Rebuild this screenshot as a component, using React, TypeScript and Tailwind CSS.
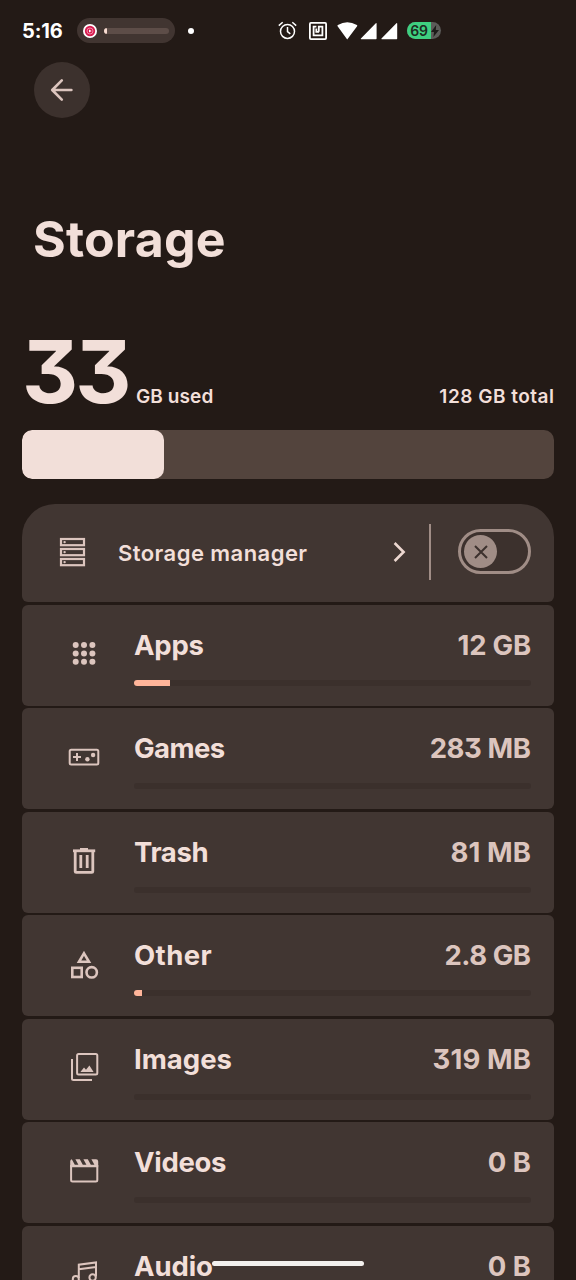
import type { ReactNode } from "react";

function Glyph({ children }: { children: ReactNode }) {
  return (
    <svg width="32" height="32" viewBox="0 0 32 32" fill="none" stroke="currentColor" strokeWidth="2">
      {children}
    </svg>
  );
}

const dots = [7.7, 16, 24.4];

const icons: Record<string, ReactNode> = {
  apps: (
    <Glyph>
      {dots.map((y) => dots.map((x) => <circle key={`${x}-${y}`} cx={x} cy={y + 0.4} r="3" fill="currentColor" stroke="none" />))}
    </Glyph>
  ),
  games: (
    <Glyph>
      <rect x="1.7" y="8.7" width="28.6" height="14.8" rx="1.5" />
      <path d="M9 12v8M5 16h8" />
      <circle cx="19.4" cy="18.2" r="2.2" fill="currentColor" stroke="none" />
      <circle cx="25.1" cy="14" r="2.2" fill="currentColor" stroke="none" />
    </Glyph>
  ),
  trash: (
    <Glyph>
      <path d="M7.2 7v20.4q0 1 1 1h15.6q1 0 1-1V7" strokeWidth="2.8" />
      <path d="M5 6.8h22.2" strokeWidth="2.8" />
      <path d="M12 5h8" strokeWidth="2" />
      <path d="M12.8 11v13M19.2 11v13" strokeWidth="2.8" />
    </Glyph>
  ),
  other: (
    <Glyph>
      <path d="M16 5.4 21 13.8H11Z" strokeWidth="2.6" />
      <rect x="4.3" y="19.8" width="9.4" height="9.2" strokeWidth="2.6" />
      <circle cx="23.7" cy="24.3" r="5.2" strokeWidth="2.6" />
    </Glyph>
  ),
  images: (
    <Glyph>
      <rect x="9.1" y="3" width="20.2" height="20.6" rx="1.5" />
      <path d="M4 8v19.4q0 1.5 1.5 1.5H24" />
      <path d="M12.4 21 16 16.6l2 2.2 3.4-4.4 4.2 6.6Z" fill="currentColor" stroke="none" />
    </Glyph>
  ),
  videos: (
    <Glyph>
      <path d="M3.1 10v14.9q0 1.5 1.5 1.5h23.2q1.5 0 1.5-1.5V10" />
      <path d="M2.2 6.5Q2.2 4.6 3.8 4.2L6.8 9.8h3.6L7.4 4.2h4.4L14.8 9.8h3.6L15.4 4.2h4.4L22.8 9.8h3.6L23.4 4.2h4.6Q30.2 4.2 30.2 6.5V12.2H2.2Z" fill="currentColor" stroke="none" />
    </Glyph>
  ),
  audio: (
    <Glyph>
      <path d="M10.8 20V6.7L28 4.5v14M10.8 11.3 28 8.9" />
      <circle cx="7.8" cy="21.1" r="3" />
      <circle cx="24.6" cy="19.5" r="3.2" />
    </Glyph>
  ),
};

const rows = [
  { icon: "apps", name: "Apps", size: "12 GB", used: 36, nameCls: "tracking-[-0.2px]", sizeCls: "tracking-[-0.2px]" },
  { icon: "games", name: "Games", size: "283 MB", used: 0, nameCls: "tracking-[-0.6px]", sizeCls: "tracking-[-0.4px] mr-[0.4px]" },
  { icon: "trash", name: "Trash", size: "81 MB", used: 0, nameCls: "tracking-[-0.4px]", sizeCls: "tracking-[0.1px]" },
  { icon: "other", name: "Other", size: "2.8 GB", used: 8, nameCls: "tracking-[0.4px]", sizeCls: "tracking-[-0.5px] mr-[0.5px]" },
  { icon: "images", name: "Images", size: "319 MB", used: 0, nameCls: "tracking-[0px]", sizeCls: "tracking-[0.1px]" },
  { icon: "videos", name: "Videos", size: "0 B", used: 0, nameCls: "tracking-[-0.3px]", sizeCls: "tracking-[0px]" },
  { icon: "audio", name: "Audio", size: "0 B", used: 0, nameCls: "tracking-[-0.1px]", sizeCls: "tracking-[0px]" },
];

function StatusBar() {
  return (
    <header className="flex h-[61px] shrink-0 items-center pl-[22px] text-white">
      <span className="w-[55px] text-[20px] leading-none font-bold tracking-[-0.1px]">5:16</span>
      <div className="flex h-[25px] w-[98px] items-center rounded-full bg-[#413531] pl-[6px]">
        <svg width="14" height="14" viewBox="0 0 14 14">
          <circle cx="7" cy="7" r="7" fill="#fff" />
          <circle cx="7" cy="7" r="5.2" fill="#d81b50" />
          <circle cx="7" cy="7" r="3" fill="none" stroke="#f6a3b8" strokeWidth="0.8" />
          <path d="M6 5.4 8.6 7 6 8.6Z" fill="#fff" />
        </svg>
        <div className="ml-[7px] h-[6px] w-[65px] overflow-hidden rounded-full bg-[#5d4d48]">
          <div className="h-full w-[3px] rounded-[1px] bg-[#f9dcd2]" />
        </div>
      </div>
      <div className="ml-[13px] size-[6px] rounded-full bg-white" />
      <svg className="ml-[84px]" width="19" height="19" viewBox="0 0 19 19" fill="none" stroke="#fff" strokeWidth="1.5">
        <circle cx="9.5" cy="10.4" r="7" />
        <path d="M9.5 6v4.7l2.8 2.2M.8 4.6 4.7 1.2M18.2 4.6l-3.9-3.4" />
      </svg>
      <svg className="ml-[12px]" width="18" height="18" viewBox="0 0 18 18" fill="none" stroke="#fff" strokeWidth="1.8">
        <rect x=".9" y=".9" width="16.2" height="16.2" rx="1" />
        <path d="M7.4 4.6H4.6v8.8h8.8V4.6H9.8v5.2M7.3 6.6v3.3h2.8" />
      </svg>
      <svg className="ml-[10px]" width="61" height="18" viewBox="0 0 61 18" fill="#fff">
        <path d="M10.2 17.6.6 4.2Q.2 3.4.9 3 10.2-2.4 19.9 3q.6.4.2 1.2Z" />
        <path d="M39.6 1.4v15.2q0 .6-.6.6H24.2q-.8 0-.3-.6L38.8 1.2q.8-.6.8.2Z" />
        <path d="M60.2 1.4v15.2q0 .6-.6.6H44.8q-.8 0-.3-.6L59.4 1.2q.8-.6.8.2Z" />
      </svg>
      <div className="ml-[9px] flex h-[17px] w-[34px] items-center overflow-hidden rounded-full bg-[#5c5b59]">
        <span className="flex h-full w-[24px] items-center justify-center bg-[#3ecf80] text-[14px] leading-none font-semibold tracking-[-0.2px] text-[#1c2a20]">69</span>
        <svg width="8" height="12" viewBox="0 0 8 12" fill="#1d1b19">
          <path d="M5.2 0 0 7h3L2.4 12 8 5H4.8Z" />
        </svg>
      </div>
    </header>
  );
}

export default function App() {
  return (
    <div className="relative flex h-[1280px] w-[576px] flex-col overflow-hidden bg-[#231a16] font-['Inter',sans-serif] text-[#f2dfd9] [font-feature-settings:'cv09'_1]">
      <StatusBar />
      <button className="mt-[1px] ml-[34px] flex size-[56px] shrink-0 items-center justify-center rounded-full bg-[#3c312d]">
        <svg width="24" height="24" viewBox="0 0 24 24" fill="none" stroke="#dcc5be" strokeWidth="2.6" strokeLinecap="round" strokeLinejoin="round">
          <path d="M11.8 2.4 2.2 12l9.6 9.6M2.6 12h18.8" />
        </svg>
      </button>
      <h1 className="mt-[91px] ml-[33px] h-[60px] shrink-0 text-[50px] leading-[60px] font-bold tracking-[0.2px]">Storage</h1>

      <section className="mt-[59px] flex h-[88px] shrink-0 items-baseline justify-between pr-[22px] pl-[22px]">
        <div className="flex items-baseline">
          <span className="w-[114px] text-[87px] leading-[88px] font-bold tracking-[-3px]">33</span>
          <span className="text-[19px] font-semibold tracking-[0.1px]">GB used</span>
        </div>
        <span className="-mr-[0.5px] text-[19px] font-semibold tracking-[0.5px]">128 GB total</span>
      </section>

      <div className="mx-[22px] mt-[14px] h-[49px] shrink-0 overflow-hidden rounded-[10px] bg-[#53443d]">
        <div className="h-full w-[142px] rounded-[10px] bg-[#f2dfd9]" />
      </div>

      <main className="mx-[22px] mt-[25px] flex flex-col gap-[2.5px]">
        <section className="flex h-[98px] shrink-0 items-center rounded-t-[33px] rounded-b-[6px] bg-[#413632]">
          <svg className="-mt-[3px] ml-[37px] text-[#dcc5be]" width="27" height="30" viewBox="0 0 27 30" fill="none" stroke="currentColor" strokeWidth="2.2">
            {[2, 12, 22].map((y) => (
              <g key={y}>
                <rect x="2" y={y} width="23" height="6.2" />
                <circle cx="5.6" cy={y + 3.1} r="1.2" fill="currentColor" stroke="none" />
              </g>
            ))}
          </svg>
          <span className="mt-[1px] ml-[32px] w-[275px] text-[22px] font-semibold tracking-[0.45px]">Storage manager</span>
          <svg className="-mt-[3px]" width="14" height="22" viewBox="0 0 14 22" fill="none" stroke="#ecd7d0" strokeWidth="2.6">
            <path d="m1.6 2 9 9-9 9" />
          </svg>
          <div className="-mt-[2px] ml-[22px] h-[56px] w-[2px] bg-[#a08d86]" />
          <div className="-mt-[3px] ml-[27px] flex h-[45px] w-[73px] items-center rounded-full border-[3px] border-[#a08d86] bg-[#3c312d] pl-[3px]">
            <div className="flex size-[33px] items-center justify-center rounded-full bg-[#a08d86]">
              <svg width="14" height="14" viewBox="0 0 14 14" stroke="#3c312d" strokeWidth="2">
                <path d="m1 1 12 12M13 1 1 13" />
              </svg>
            </div>
          </div>
        </section>

        {rows.map((row) => (
          <section key={row.name} className="flex h-[101px] shrink-0 rounded-[6px] bg-[#413632]">
            <div className="flex h-[97px] w-[112px] items-center justify-center pl-[12px] text-[#dcc5be]">{icons[row.icon]}</div>
            <div className="mr-[23px] flex-1 pt-[20px]">
              <div className="flex h-[40px] items-center justify-between text-[27.5px] leading-[40px] font-bold">
                <span className={row.nameCls}>{row.name}</span>
                <span className={`text-[#dcc5be] ${row.sizeCls}`}>{row.size}</span>
              </div>
              <div className="mt-[15px] h-[6px] overflow-hidden rounded-full bg-[#3b302c]">
                <div className="h-full bg-[#ffb59a]" style={{ width: row.used }} />
              </div>
            </div>
          </section>
        ))}
      </main>

      <div className="absolute top-[1261px] left-[212px] h-[5px] w-[152px] rounded-full bg-[#f3f0ee]" />
    </div>
  );
}
